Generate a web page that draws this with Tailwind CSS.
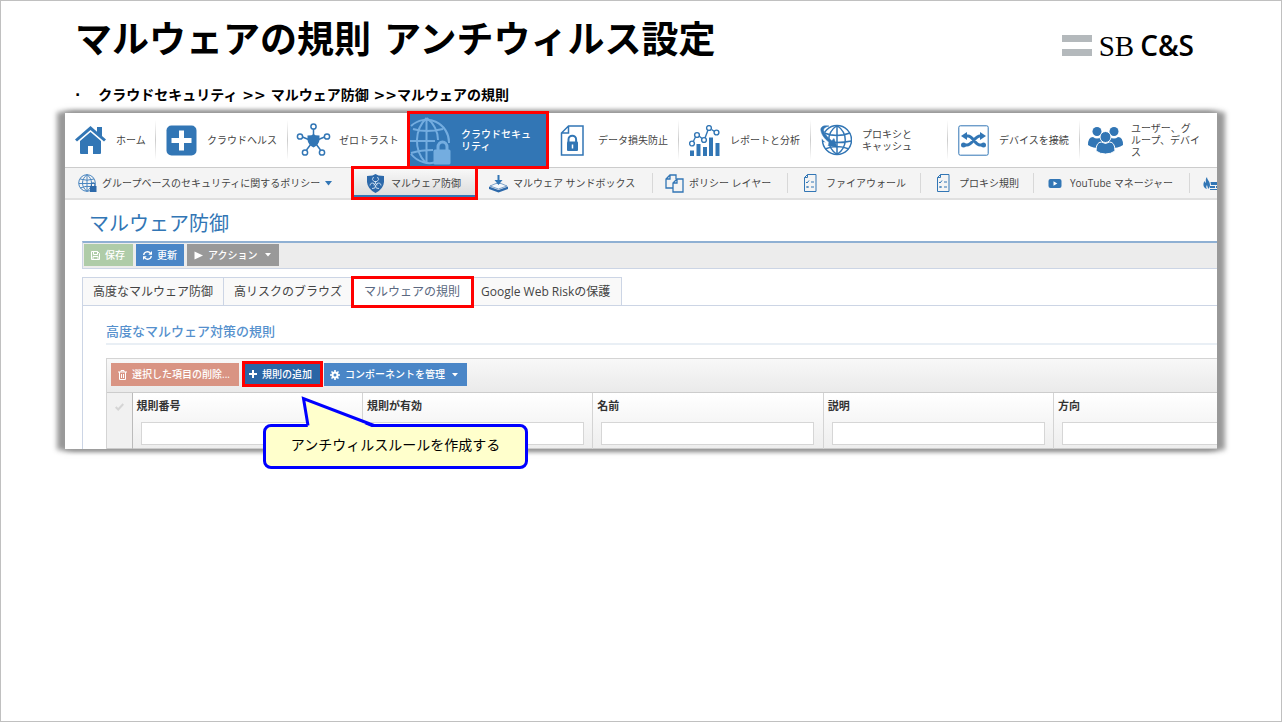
<!DOCTYPE html>
<html lang="ja">
<head>
    <meta charset="UTF-8">
    <meta name="viewport" content="width=device-width, initial-scale=1.0">
    <title>マルウェアの規則 アンチウィルス設定</title>
    <script src="https://cdn.jsdelivr.net/npm/@tailwindcss/browser@4"></script>
</head>
<body class="min-h-screen border border-[#c0c0c0] bg-white font-['Open_Sans','Noto_Sans_CJK_JP',sans-serif] text-[#444]">
    <!-- Slide header -->
    <header class="flex items-start justify-between pl-[74px] pr-[87px] pt-4 text-black">
        <h1 class="font-['DejaVu_Sans','Noto_Sans_CJK_JP',sans-serif] text-[37px] leading-[48px] font-bold">マルウェアの規則 アンチウィルス設定</h1>
        <div class="flex items-center gap-[7px] pt-2">
            <div class="flex flex-col gap-[7px]">
                <span class="h-[7px] w-[30px] bg-[#b4b9bc]"></span>
                <span class="h-[7px] w-[30px] bg-[#b4b9bc]"></span>
            </div>
            <div class="flex items-baseline gap-[6px] leading-[40px]">
                <span class="font-['Liberation_Serif',serif] text-[29px]">SB</span>
                <span class="text-[28px] font-semibold">C&amp;S</span>
            </div>
        </div>
    </header>
    <ul class="pl-[74px] pt-[18px] font-['DejaVu_Sans','Noto_Sans_CJK_JP',sans-serif] text-[14px] leading-[22px] font-bold text-black">
        <li class="flex gap-[18px]"><span>·</span><span>クラウドセキュリティ &gt;&gt; マルウェア防御 &gt;&gt;マルウェアの規則</span></li>
    </ul>

    <main class="relative mx-16 mt-[7px] bg-white shadow-[7px_0_5px_1px_#999,-7px_0_5px_1px_#999,0_0_6px_1px_#777]">
        <div class="overflow-x-clip">
            <!-- Main navigation -->
            <nav class="border-b border-[#ccc]">
                <ul class="flex h-[54px] text-[10px] leading-[12px]">
                    <li class="flex w-[91px] shrink-0 items-center">
                        <a href="#" class="flex flex-1 items-center gap-2.5 pl-2.5">
                            <svg class="w-[31px] shrink-0" viewBox="0 0 31 28" fill="#3276b5"><path d="M15.500 0 0 13.500l2 2L15.500 4 29 15.500l2-2-4-3.500V1h-5v4.700z"/><path d="M15.500 6 5 15v12q0 1 1 1h7v-8h5v8h7q1 0 1-1V15z"/></svg>
                            <span>ホーム</span>
                        </a>
                        <span class="h-10 w-px bg-linear-to-b from-transparent via-[#ccc] to-transparent"></span>
                    </li>
                    <li class="flex w-[132px] shrink-0 items-center">
                        <a href="#" class="flex flex-1 items-center gap-2.5 pl-2.5">
                            <svg class="w-[31px] shrink-0" viewBox="0 0 31 31"><rect x="0.500" y="0.500" width="30" height="30" rx="5" fill="#3276b5"/><path d="M13 5.500h5V13h7.500v5H18v7.500h-5V18H5.500v-5H13z" fill="#fff"/></svg>
                            <span>クラウドヘルス</span>
                        </a>
                        <span class="h-10 w-px bg-linear-to-b from-transparent via-[#ccc] to-transparent"></span>
                    </li>
                    <li class="flex w-[122px] shrink-0 items-center">
                        <a href="#" class="flex flex-1 items-center gap-2.5 pl-2.5">
                            <svg class="-mx-0.5 w-[35px] shrink-0" viewBox="0 0 35 34" fill="none" stroke="#3276b5" stroke-width="1.500"><path d="M17.500 6v7M6.500 14l6 2.500M28.500 14l-6 2.500M15 21l-4.500 6M20 21l4.500 6"/><circle cx="17.500" cy="3.500" r="2.600"/><circle cx="4" cy="13.500" r="2.600"/><circle cx="31" cy="13.500" r="2.600"/><circle cx="9" cy="29.500" r="2.600"/><circle cx="26" cy="29.500" r="2.600"/><path d="m17.500 11 2 1.200 4 .3v4.500q-.5 4.500-6 7.500-5.500-3-6-7.500v-4.500l4-.3z" fill="#3276b5" stroke="none"/></svg>
                            <span>ゼロトラスト</span>
                        </a>
                    </li>
                    <li class="relative z-10 mt-px mr-px flex h-[52px] w-[136px] shrink-0 bg-[#3276b5] text-white outline-3 outline-[#f00]">
                        <a href="#" class="flex flex-1 items-center gap-2.5">
                            <svg class="w-[41px] shrink-0" viewBox="0 0 41 49" fill="none" stroke="#74ade0" stroke-width="2"><path d="M24 46.500Q19 48 13 46A23.500 23.500 0 0 1 1 38M1 10a22.500 22.500 0 0 1 38 17"/><path d="M16.500 2C4 14 4 34 15 46M16.500 2C24 7 28 16 28 24M16.500 2v44M3 13q13 4 30 0M0 25h25M1 37q10-3 22-3"/><path d="M28 35v-4a4.500 5 0 0 1 9 0v4" stroke-width="3"/><rect x="23.500" y="33.500" width="17" height="15" rx="1.500" fill="#74ade0" stroke="none"/></svg>
                            <span class="font-medium">クラウドセキュ<br>リティ</span>
                        </a>
                    </li>
                    <li class="flex w-[132px] shrink-0 items-center">
                        <a href="#" class="flex flex-1 items-center gap-2.5 pl-2.5">
                            <svg class="w-[31px] shrink-0" viewBox="0 0 31 31" fill="none" stroke="#3276b5" stroke-width="1.500"><path d="M11.500 1H26v29H4.500V8zM11.500 1v7h-7"/><path d="M11.500 17v-2.500a3.800 3.800 0 0 1 7.600 0V17" stroke-width="2"/><rect x="10" y="16.500" width="11" height="9.500" rx="1" fill="#3276b5" stroke="none"/><path d="M15.500 19.500v4" stroke="#fff"/></svg>
                            <span>データ損失防止</span>
                        </a>
                        <span class="h-10 w-px bg-linear-to-b from-transparent via-[#ccc] to-transparent"></span>
                    </li>
                    <li class="flex w-[132px] shrink-0 items-center">
                        <a href="#" class="flex flex-1 items-center gap-2.5 pl-2.5">
                            <svg class="w-[31px] shrink-0" viewBox="0 0 31 31"><path d="M1 25.500h4V31H1zM7.500 19h4v12h-4zM14 22h4v9h-4zM20 12.500h4V31h-4zM26.500 18h4v13h-4z" fill="#3276b5"/><g fill="none" stroke="#3276b5" stroke-width="1.400"><path d="m4.500 16 2-4M10 11l3 2.500M16 13l3-8M22.500 4.500l3 2"/><circle cx="3" cy="18.500" r="2.400"/><circle cx="8" cy="10" r="2.400"/><circle cx="15" cy="15" r="2.400"/><circle cx="20" cy="3" r="2.400"/><circle cx="27.500" cy="7.500" r="2.400"/></g></svg>
                            <span>レポートと分析</span>
                        </a>
                        <span class="h-10 w-px bg-linear-to-b from-transparent via-[#ccc] to-transparent"></span>
                    </li>
                    <li class="flex w-[137px] shrink-0 items-center">
                        <a href="#" class="flex flex-1 items-center gap-2.5 pl-2.5">
                            <svg class="-ml-px w-[32px] shrink-0" viewBox="0 0 32 32" fill="none" stroke="#3276b5" stroke-width="1.500"><circle cx="17" cy="16" r="14.500"/><path d="M17 1.500v29M17 1.500C6 9 6 23 17 30.500M17 1.500c11 7.500 11 21.500 0 29M4 9q13 5 26 0M2.500 17q14 3 29 0M5 25q12-5 24 0"/><path d="M5 2C-1 5 1 12 9 18" stroke="#fff" stroke-width="5"/><path d="M9 2C3 1 0 3 1 7c1 5 5 9 9 12l-2 2.500 9 1.500-3-8.500-2.200 2.200C7 13 4 9 3.500 6c0-2 2-3 5.500-4z" fill="#3276b5" stroke-width=".5"/></svg>
                            <span>プロキシと<br>キャッシュ</span>
                        </a>
                        <span class="h-10 w-px bg-linear-to-b from-transparent via-[#ccc] to-transparent"></span>
                    </li>
                    <li class="flex w-[132px] shrink-0 items-center">
                        <a href="#" class="flex flex-1 items-center gap-2.5 pl-2.5">
                            <svg class="w-[31px] shrink-0" viewBox="0 0 31 31" fill="none" stroke="#3276b5"><rect x="0.800" y="0.800" width="29.400" height="29.400" rx="1.500"/><path d="M6 11h4c5 0 7 9 12 9h4M5 20h4c5 0 8-9 13-9h2" stroke-width="3"/><path d="m3 11 6-4v8zM28 11l-6-4v8z" fill="#3276b5" stroke="none"/><circle cx="5.500" cy="20" r="2.500" fill="#3276b5" stroke="none"/><circle cx="25.500" cy="20" r="2.500" fill="#3276b5" stroke="none"/></svg>
                            <span>デバイスを接続</span>
                        </a>
                        <span class="h-10 w-px bg-linear-to-b from-transparent via-[#ccc] to-transparent"></span>
                    </li>
                    <li class="flex w-[137px] shrink-0 items-center">
                        <a href="#" class="flex flex-1 items-center gap-2.5 pl-2.5">
                            <svg class="-mx-0.5 w-[35px] shrink-0" viewBox="0 0 35 27" fill="#3276b5" stroke="#fff" stroke-width="1"><g stroke="none"><circle cx="9" cy="4.500" r="4.500"/><circle cx="26" cy="4.500" r="4.500"/><path d="M0 18q0-8 5-8 4 3 8 0 4 1 4 5v6Q6 22 0 18zM35 18q0-8-5-8-4 3-8 0-4 1-4 5v6q11 1 17-3z"/></g><circle cx="17.500" cy="10" r="5.500"/><path d="M8 24q0-9 5.500-9 4 3 8 0 5.500 0 5.500 9-4 3-9.500 3T8 24z"/></svg>
                            <span>ユーザー、グ<br>ループ、デバイ<br>ス</span>
                        </a>
                    </li>
                </ul>
            </nav>

            <!-- Sub navigation -->
            <nav class="border-b-2 border-[#e0e0e0] bg-[#f4f4f4]">
                <ul class="flex h-[30px] items-center text-[10px] whitespace-nowrap">
                    <li class="w-[289px] shrink-0">
                        <a href="#" class="flex items-center gap-[5px] pl-[13px]">
                            <svg class="w-[19px] shrink-0" viewBox="0 0 19 19" fill="none" stroke="#4a86c0"><circle cx="9" cy="9" r="8.300"/><path d="M9 .7v16.600M9 .7C3 5 3 13 9 17.300M9 .7c6 4.300 6 12.300 0 16.600M2 5q7 2.500 14 0M1 9.500h16M2 14q7-2.500 10-1.500"/><path d="M13.500 12v-1.500a1.700 1.700 0 0 1 3.500 0V12" stroke="#2d69aa"/><rect x="12" y="12" width="6.500" height="6" fill="#2d69aa" stroke="none"/></svg>
                            <span>グループベースのセキュリティに関するポリシー</span>
                            <svg class="w-[7px]" viewBox="0 0 7 5" fill="#3276b5"><path d="M0 0h7L3.500 4.500z"/></svg>
                        </a>
                    </li>
                    <li class="relative z-10 w-[121px] shrink-0 border-b-2 border-[#3276b5] bg-linear-to-b from-[#f8f8f8] to-[#ddd] outline-3 outline-[#f00]">
                        <a href="#" class="flex h-[26px] items-center gap-1.5 pt-0.5 pl-3">
                            <svg class="w-[19px] shrink-0" viewBox="0 0 19 19"><path d="m9.500 0 3 1.500 5.500.5v6q-.5 7-8.500 11Q1.500 15 1 8V2l5.500-.5z" fill="#2d69aa"/><g fill="none" stroke="#d5e5f4" stroke-width=".9"><path d="M7.500 3Q5 5.500 8 7.500h3Q14 5.500 11.500 3M4 11.500q.5-3.500 4-2l1.500 2.500Q9.500 15 6 14.500M15 11.500q-.5-3.500-4-2L9.500 12q0 3 3.500 2.500"/><path d="M9.500 7.500v2l-2 1.500M9.500 9.500l2 1.500"/></g></svg>
                            <span>マルウェア防御</span>
                        </a>
                    </li>
                    <li class="flex w-[178px] shrink-0 items-center">
                        <a href="#" class="flex flex-1 items-center gap-[5px] pl-3.5">
                            <svg class="w-[19px] shrink-0" viewBox="0 0 19 19"><path d="M0 12.500v2.500l9.500 3.500L19 15v-2.500L9.500 16z" fill="#2d69aa"/><path d="m1 12 6-2.500h5l6 2.500-8.500 3z" fill="#f4f8fc" stroke="#2d69aa" stroke-width=".6"/><path d="M8.500 1h2v5h3l-4 5-4-5h3z" fill="#3276b5"/></svg>
                            <span>マルウェア サンドボックス</span>
                        </a>
                        <span class="h-5 w-px bg-[#d8d8d8]"></span>
                    </li>
                    <li class="flex w-[135px] shrink-0 items-center">
                        <a href="#" class="flex flex-1 items-center gap-[5px] pl-3">
                            <svg class="w-[19px] shrink-0" viewBox="0 0 19 19" fill="none" stroke="#3276b5" stroke-width="1.300"><path d="M8 14H1V5l4-4h6v4M5 1v4H1"/><path d="M12 5h6v13H8V9zM12 5v4H8"/></svg>
                            <span>ポリシー レイヤー</span>
                        </a>
                        <span class="h-5 w-px bg-[#d8d8d8]"></span>
                    </li>
                    <li class="flex w-[133px] shrink-0 items-center">
                        <a href="#" class="flex flex-1 items-center gap-[5px] pl-3.5">
                            <svg class="w-[19px] shrink-0" viewBox="0 0 19 18" fill="none" stroke="#3276b5"><path d="M5.500.5H14v17H2.500v-14zM5.500.5v3h-3"/><path d="m4 8 1 1 2-2.500M9 8h3M4.500 12l2 2m0-2-2 2M9 13h3"/></svg>
                            <span>ファイアウォール</span>
                        </a>
                        <span class="h-5 w-px bg-[#d8d8d8]"></span>
                    </li>
                    <li class="flex w-[113px] shrink-0 items-center">
                        <a href="#" class="flex flex-1 items-center gap-[5px] pl-3.5">
                            <svg class="w-[19px] shrink-0" viewBox="0 0 19 18" fill="none" stroke="#3276b5"><path d="M5.500.5H14v17H2.500v-14zM5.500.5v3h-3"/><path d="m4 8 1 1 2-2.500M9 8h3M4.500 12l2 2m0-2-2 2M9 13h3"/></svg>
                            <span>プロキシ規則</span>
                        </a>
                        <span class="h-5 w-px bg-[#d8d8d8]"></span>
                    </li>
                    <li class="flex w-[156px] shrink-0 items-center">
                        <a href="#" class="flex flex-1 items-center gap-[5px] pl-3">
                            <svg class="w-[19px] shrink-0" viewBox="0 0 19 19"><rect x="2.500" y="5" width="13" height="9" rx="2" fill="#3276b5"/><path d="M7.500 7.300v4.400l3.800-2.200z" fill="#fff"/></svg>
                            <span>YouTube マネージャー</span>
                        </a>
                        <span class="h-5 w-px bg-[#d8d8d8]"></span>
                    </li>
                    <li class="shrink-0">
                        <a href="#" aria-label="ファイアウォール ログ" class="flex pl-3">
                            <svg class="w-[22px]" viewBox="0 0 22 18" fill="#3276b5"><path d="M5 3c0 3 3 4 3 8 0 2-1 3-2 4 0-2-1-3-1-4-1 1-1 3 0 4-4-1-4-5-3-7l1-1c0 1 0 1 1 2 0-2-1-4 1-6z"/><path d="M8.500 8H22v3H9zM8 12h5v2H8zM14 12h8v2h-8zM8 15h14v1H8z"/></svg>
                        </a>
                    </li>
                </ul>
            </nav>

            <div class="pl-[17px]">
                <h2 class="pt-2 pb-px pl-[7px] text-[20px] leading-[32px] text-[#3276b5]">マルウェア防御</h2>
                <!-- Page toolbar -->
                <div class="flex gap-[3px] border-t-2 border-b border-l border-t-[#8fb0d3] border-b-[#ccd5e5] border-l-[#ccd5e5] bg-[#ececec] pt-px pb-0.5 pl-px text-[10px] font-medium text-white">
                    <button type="button" disabled class="flex h-[22px] w-[49px] items-center gap-[5px] bg-[#afcca8] pl-[7px]">
                        <svg class="w-[9px]" viewBox="0 0 9 9" fill="none" stroke="#fff"><path d="M.5.5h6l2 2v6h-8zM2.500.5v3h4v-3M2 8.500v-3h5v3"/></svg>
                        保存
                    </button>
                    <button type="button" class="flex h-[22px] w-[48px] items-center gap-[5px] bg-[#4a86c7] pl-[7px]">
                        <svg class="w-[9px]" viewBox="0 0 9 9" fill="none" stroke="#fff" stroke-width="1.400"><path d="M.7 4A3.700 3.700 0 0 1 7.500 2.500M8.300 5A3.700 3.700 0 0 1 1.500 6.500"/><path d="M9 0v3.700H5.300zM0 9V5.300h3.700z" fill="#fff" stroke="none"/></svg>
                        更新
                    </button>
                    <button type="button" class="flex h-[22px] w-[92px] items-center gap-[5px] bg-[#999] pl-[7px]">
                        <svg class="w-[9px]" viewBox="0 0 9 9" fill="#fff"><path d="M.5.5 9 4.500l-8.500 4z"/></svg>
                        アクション
                        <svg class="ml-0.5 w-[6px]" viewBox="0 0 6 4" fill="#fff"><path d="M0 0h6L3 3.500z"/></svg>
                    </button>
                </div>

                <!-- Tabs -->
                <div role="tablist" class="mt-2 flex h-[29px] border-b border-[#ccd5e5] text-[12px] whitespace-nowrap">
                    <button type="button" role="tab" class="w-[142px] border-t border-r border-l border-[#ccd5e5] bg-[#f9f9f9] pl-2.5 text-left">高度なマルウェア防御</button>
                    <button type="button" role="tab" class="w-[130px] border-t border-[#ccd5e5] bg-[#f9f9f9] pl-2.5 text-left">高リスクのブラウズ</button>
                    <button type="button" role="tab" aria-selected="true" class="z-10 mt-0.5 w-[117px] bg-white pl-2.5 text-left text-[#5a6880] outline-3 outline-[#f00]">マルウェアの規則</button>
                    <button type="button" role="tab" class="w-[151px] border-t border-r border-[#ccd5e5] bg-[#f9f9f9] pl-2.5 text-left">Google Web Riskの保護</button>
                </div>

                <section class="border-l border-[#ccd5e5] pl-[23px]">
                    <h3 class="border-b-2 border-[#e9eff5] pt-[15px] pb-px text-[13px] leading-[21px] font-medium text-[#5590cd]">高度なマルウェア対策の規則</h3>
                    <!-- Rules grid -->
                    <div class="mt-[13px] border-t border-l border-[#d4d4d4]">
                        <div class="flex h-[34px] gap-1 border-b border-[#ccc] bg-linear-to-b from-[#f8f8f8] to-[#eaeaea] pt-1 pl-1 text-[10px] font-medium whitespace-nowrap text-white">
                            <button type="button" disabled class="mr-0.5 flex h-[23px] w-[128px] items-center gap-[5px] bg-[#d99483] pl-[7px]">
                                <svg class="w-[9px]" viewBox="0 0 9 10" fill="none" stroke="#fff"><path d="M0 2h9M3 2V.5h3V2M1.500 2v7.500h6V2M3.500 4v4M5.500 4v4"/></svg>
                                選択した項目の削除...
                            </button>
                            <button type="button" class="mt-px flex h-[20px] w-[75px] items-center gap-[5px] bg-[#2a66a5] pl-1 outline-3 outline-[#f00]">
                                <svg class="w-[8px]" viewBox="0 0 8 8" fill="#fff"><path d="M3 0h2v3h3v2H5v3H3V5H0V3h3z"/></svg>
                                規則の追加
                            </button>
                            <button type="button" class="flex h-[23px] w-[143px] items-center gap-[5px] bg-[#4a86c7] pl-1.5">
                                <svg class="w-[10px]" viewBox="0 0 10 10" fill="none" stroke="#fff"><circle cx="5" cy="5" r="2.500" stroke-width="2"/><path d="M5 0v2M5 8v2M0 5h2M8 5h2M1.500 1.500 3 3M7 7l1.500 1.500M8.500 1.500 7 3M3 7 1.500 8.500" stroke-width="1.600"/></svg>
                                コンポーネントを管理
                                <svg class="ml-0.5 w-[6px]" viewBox="0 0 6 4" fill="#fff"><path d="M0 0h6L3 3.500z"/></svg>
                            </button>
                        </div>
                        <table class="w-[1177px] table-fixed border-collapse bg-linear-to-b from-white to-[#eee] text-[11px] text-[#333]">
                            <thead>
                                <tr class="h-[55px] border-b border-[#ccc] text-left align-top">
                                    <th class="w-[25px] border-r border-[#bbb] bg-[#f1f1f1] pt-2.5 pl-2">
                                        <svg class="w-[9px]" viewBox="0 0 9 8" fill="none" stroke="#d5d5d5" stroke-width="2"><path d="m.7 4 2.500 2.500L8.300 1"/></svg>
                                    </th>
                                    <th class="border-r border-[#d4d4d4] pt-[5px] pr-2 pl-1">
                                        <label for="number" class="block leading-[16px]">規則番号</label>
                                        <input id="number" type="text" class="mt-2 ml-1 block h-[23px] w-[213px] border border-[#d6d6d6] bg-white px-1 font-normal">
                                    </th>
                                    <th class="border-r border-[#d4d4d4] pt-[5px] pr-2 pl-1">
                                        <label for="enabled" class="block leading-[16px]">規則が有効</label>
                                        <input id="enabled" type="text" class="mt-2 ml-1 block h-[23px] w-[213px] border border-[#d6d6d6] bg-white px-1 font-normal">
                                    </th>
                                    <th class="border-r border-[#d4d4d4] pt-[5px] pr-2 pl-1">
                                        <label for="name" class="block leading-[16px]">名前</label>
                                        <input id="name" type="text" class="mt-2 ml-1 block h-[23px] w-[213px] border border-[#d6d6d6] bg-white px-1 font-normal">
                                    </th>
                                    <th class="border-r border-[#d4d4d4] pt-[5px] pr-2 pl-1">
                                        <label for="description" class="block leading-[16px]">説明</label>
                                        <input id="description" type="text" class="mt-2 ml-1 block h-[23px] w-[213px] border border-[#d6d6d6] bg-white px-1 font-normal">
                                    </th>
                                    <th class="pt-[5px] pr-2 pl-1">
                                        <label for="direction" class="block leading-[16px]">方向</label>
                                        <input id="direction" type="text" class="mt-2 ml-1 block h-[23px] w-[213px] border border-[#d6d6d6] bg-white px-1 font-normal">
                                    </th>
                                </tr>
                            </thead>
                        </table>
                    </div>
                </section>
            </div>
        </div>

        <!-- Callout pointing at the add button -->
        <div class="absolute top-[311px] left-[198px] z-20 flex h-[45px] w-[265px] items-center justify-center rounded-lg border-3 border-[#00f] bg-[#ffffcc] pb-1 text-[14px] text-black">
            アンチウィルスルールを作成する
            <svg class="absolute -top-[32px] left-[34px] w-[80px]" viewBox="0 0 80 33"><path d="M8 33 3.500 3.500 74 33z" fill="#ffffcc"/><path d="M8 30.500 3.500 3.500 74 30.500" fill="none" stroke="#00f" stroke-width="3"/></svg>
        </div>
    </main>
</body>
</html>
